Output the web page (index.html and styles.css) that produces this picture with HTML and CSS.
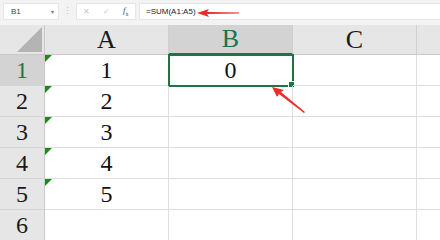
FILE: index.html
```html
<!DOCTYPE html>
<html lang="en">
<head>
    <meta charset="UTF-8">
    <title>Sheet</title>
    <link rel="stylesheet" href="styles.css">
</head>
<body>

    <div class="toolbar">
        <div class="namebox">
            <span>B1</span>
            <span class="caret">&#9662;</span>
        </div>
        <div class="dots">&#8942;</div>
        <div class="buttons">
            <span class="btn">&#10005;</span>
            <span class="btn">&#10003;</span>
            <span class="btn fx"><i>f</i><sub>x</sub></span>
        </div>
        <div class="formula">=SUM(A1:A5)</div>
        <svg class="arrow arrow-top" width="44" height="10" viewBox="0 0 44 10">
            <polygon points="0,5 12,1 10,4 42,4.4 42,5.6 10,6 12,9" fill="#ee2a2a"/>
        </svg>
    </div>

    <div class="sheet">
        <div class="corner"><span class="tri"></span></div>
        <div class="colhead">A</div>
        <div class="colhead active">B</div>
        <div class="colhead">C</div>
        <div class="colhead last"></div>

        <div class="rowhead active">1</div>
        <div class="cell flag">1</div>
        <div class="cell selected">0<span class="handle"></span></div>
        <div class="cell"></div>
        <div class="cell last"></div>

        <div class="rowhead">2</div>
        <div class="cell flag">2</div>
        <div class="cell"></div>
        <div class="cell"></div>
        <div class="cell last"></div>

        <div class="rowhead">3</div>
        <div class="cell flag">3</div>
        <div class="cell"></div>
        <div class="cell"></div>
        <div class="cell last"></div>

        <div class="rowhead">4</div>
        <div class="cell flag">4</div>
        <div class="cell"></div>
        <div class="cell"></div>
        <div class="cell last"></div>

        <div class="rowhead">5</div>
        <div class="cell flag">5</div>
        <div class="cell"></div>
        <div class="cell"></div>
        <div class="cell last"></div>

        <div class="rowhead">6</div>
        <div class="cell"></div>
        <div class="cell"></div>
        <div class="cell"></div>
        <div class="cell last"></div>

        <svg class="arrow arrow-cell" width="36" height="28" viewBox="0 0 36 28">
            <polygon points="1,1 13,4 10,6 34,26 33,27 8,8 6,11" fill="#ee2a2a"/>
        </svg>
    </div>

</body>
</html>
```

FILE: styles.css
```css
body {
    margin: 0;
    width: 440px;
    height: 240px;
    overflow: hidden;
    background: #ffffff;
    font-family: "Liberation Sans", Arial, sans-serif;
}
.toolbar {
    position: relative;
    display: flex;
    align-items: center;
    height: 25px;
    padding: 0 0 3px 3px;
    box-sizing: border-box;
    background-color: #f3f3f3;
}
.namebox {
    display: flex;
    justify-content: space-between;
    align-items: center;
    width: 56px;
    height: 17px;
    padding: 0 4px 0 7px;
    box-sizing: border-box;
    background: white;
    border: 1px solid #e6e6e6;
    font-size: 8px;
    color: #444;
}
.caret {
    font-size: 6px;
    color: #777;
}
.dots {
    width: 17px;
    text-align: center;
    font-size: 9px;
    color: #c4c4c4;
}
.buttons {
    display: flex;
    align-items: center;
    justify-content: space-around;
    width: 60px;
    height: 17px;
    box-sizing: border-box;
    background: white;
    border: 1px solid #e6e6e6;
}
.btn {
    font-size: 8px;
    color: #c8c8c8;
}
.btn.fx {
    font-family: "Liberation Serif", serif;
    font-size: 9px;
    color: #555;
}
.btn.fx sub {
    font-size: 6px;
}
.formula {
    flex: 1;
    height: 17px;
    margin-left: 3px;
    padding-left: 6px;
    box-sizing: border-box;
    background: white;
    border: 1px solid #e6e6e6;
    border-right: none;
    font-size: 8px;
    line-height: 15px;
    color: #222;
}
.arrow {
    position: absolute;
}
.arrow-top {
    left: 197px;
    top: 8px;
}
.sheet {
    position: relative;
    display: grid;
    grid-template-columns: 45px 124px 124px 124px 1fr;
    grid-template-rows: 30px repeat(6, 31px);
    font-family: "Liberation Serif", "Times New Roman", serif;
}
.corner {
    position: relative;
    background: #e6e6e6;
    border-right: 1px solid #c9c9c9;
    border-bottom: 1px solid #c9c9c9;
}
.tri {
    position: absolute;
    right: 2px;
    bottom: 2px;
    width: 0;
    height: 0;
    border-left: 25px solid transparent;
    border-bottom: 25px solid #b4b4b4;
}
.colhead {
    display: flex;
    align-items: center;
    justify-content: center;
    background: #e6e6e6;
    border-right: 1px solid #d0d0d0;
    border-bottom: 1px solid #c9c9c9;
    font-size: 26px;
    color: #1a1a1a;
}
.colhead.active {
    background: #d3d3d3;
    border-bottom: 2px solid #217346;
    color: #217346;
}
.colhead.last {
    border-right: none;
}
.rowhead {
    display: flex;
    align-items: center;
    justify-content: center;
    background: #e6e6e6;
    border-right: 1px solid #c9c9c9;
    border-bottom: 1px solid #d4d4d4;
    font-size: 24px;
    color: #1a1a1a;
}
.rowhead.active {
    background: #d3d3d3;
    color: #217346;
}
.cell {
    position: relative;
    display: flex;
    align-items: center;
    justify-content: center;
    border-right: 1px solid #dedede;
    border-bottom: 1px solid #dedede;
    font-size: 24px;
    color: #111;
}
.cell.last {
    border-right: none;
}
.cell.flag::before {
    content: "";
    position: absolute;
    left: 0;
    top: 0;
    border-top: 7px solid #1b8a1b;
    border-right: 7px solid transparent;
}
.cell.selected {
    outline: 2px solid #217346;
    outline-offset: -1px;
}
.handle {
    position: absolute;
    right: -3px;
    bottom: -3px;
    width: 5px;
    height: 5px;
    background: #217346;
    border: 1px solid white;
}
.arrow-cell {
    left: 271px;
    top: 61px;
}
```
